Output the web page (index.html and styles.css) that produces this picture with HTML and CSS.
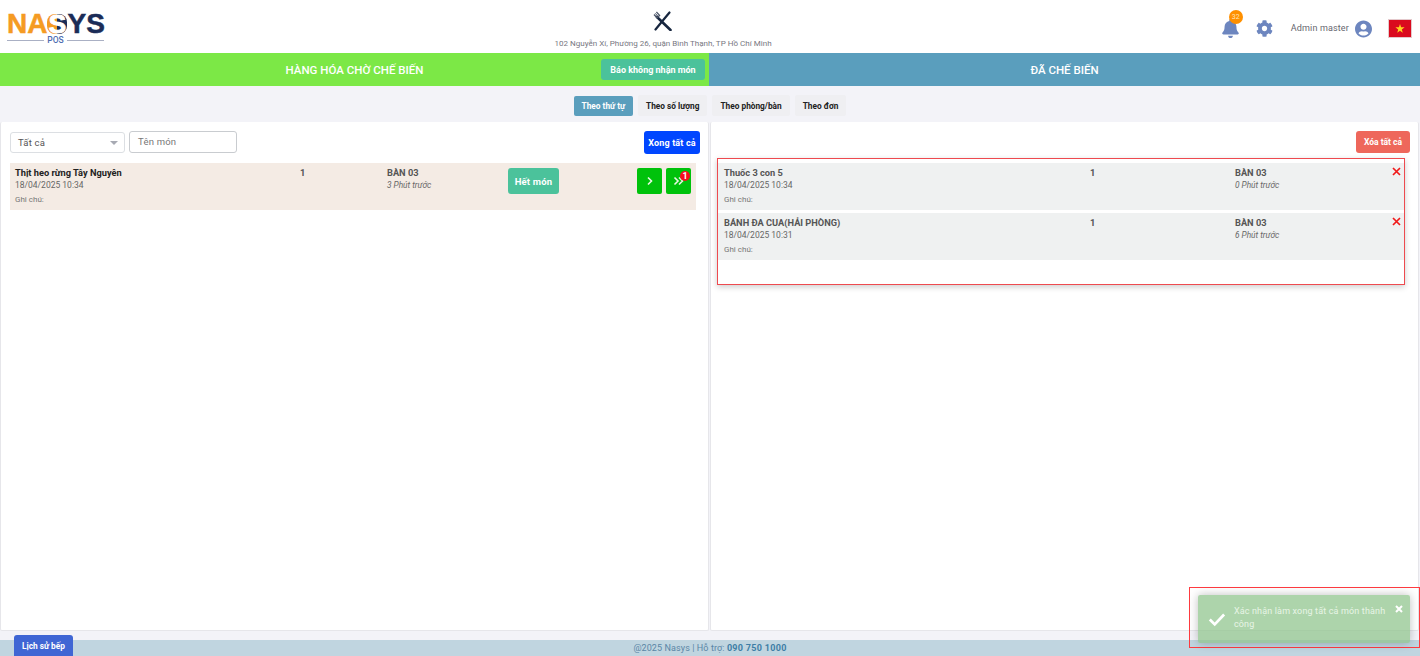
FILE: index.html
```html
<!DOCTYPE html>
<html lang="vi">
<head>
<meta charset="utf-8">
<title>Nasys POS</title>
<link rel="stylesheet" href="styles.css">
</head>
<body>
<div class="page">
  <header class="topbar">
    <div class="logo">
      <div class="logo-word"><span class="l-o">NA</span><span class="l-s">S</span><span class="l-n">YS</span></div>
      <div class="logo-sub"><i></i><span>POS</span><i></i></div>
    </div>
    <div class="brand">
      <svg class="cutlery" viewBox="0 0 20 20" width="20" height="20" aria-hidden="true">
        <path d="M4 6 L17.5 19" stroke="#17263f" stroke-width="2.6" stroke-linecap="round"/>
        <path d="M16.5 1.5 L11.5 7.5 L2.5 18.5" stroke="#17263f" stroke-width="2.2" stroke-linecap="round"/>
        <path d="M1 3.5 L4 6.8 L6.6 4.4 L3.4 1" stroke="#4b5568" stroke-width="1.3" fill="none"/>
        <path d="M2.2 2.3 L5.2 5.6" stroke="#4b5568" stroke-width="1"/>
      </svg>
      <div class="address">102 Nguyễn Xí, Phường 26, quận Bình Thạnh, TP Hồ Chí Minh</div>
    </div>
    <div class="tools">
      <div class="bell">
        <svg viewBox="0 0 448 512" width="17" height="19" aria-hidden="true"><path fill="#6d86bf" d="M224 512c35.32 0 63.97-28.65 63.97-64H160.03c0 35.35 28.65 64 63.97 64zm215.39-149.71c-19.32-20.76-55.47-51.99-55.47-154.29 0-77.7-54.48-139.9-127.94-155.16V32c0-17.67-14.32-32-31.98-32s-31.98 14.33-31.98 32v20.84C118.56 68.1 64.08 130.3 64.08 208c0 102.3-36.15 133.53-55.47 154.29-6 6.45-8.66 14.16-8.61 21.71.11 16.4 12.98 32 32.1 32h383.8c19.12 0 32-15.6 32.1-32 .05-7.55-2.61-15.27-8.61-21.71z"/></svg>
        <span class="bell-badge">32</span>
      </div>
      <svg class="gear" viewBox="0 0 512 512" width="17" height="17" aria-hidden="true"><path fill="#6d86bf" d="M487.4 315.7l-42.6-24.6c4.3-23.2 4.3-47 0-70.2l42.6-24.6c4.9-2.8 7.1-8.6 5.5-14-11.1-35.6-30-67.8-54.7-94.6-3.8-4.1-10-5.1-14.8-2.3L380.8 110c-17.9-15.4-38.5-27.3-60.8-35.1V25.8c0-5.6-3.9-10.5-9.4-11.7-36.7-8.2-74.3-7.8-109.2 0-5.5 1.2-9.4 6.1-9.4 11.7V75c-22.2 7.9-42.8 19.8-60.8 35.1L88.7 85.5c-4.9-2.8-11-1.9-14.8 2.3-24.7 26.7-43.6 58.9-54.7 94.6-1.7 5.4.6 11.2 5.5 14L67.3 221c-4.3 23.2-4.3 47 0 70.2l-42.6 24.6c-4.9 2.8-7.1 8.6-5.5 14 11.1 35.6 30 67.8 54.7 94.6 3.8 4.1 10 5.1 14.8 2.3l42.6-24.6c17.9 15.4 38.5 27.3 60.8 35.1v49.2c0 5.6 3.9 10.5 9.4 11.7 36.7 8.2 74.3 7.8 109.2 0 5.5-1.2 9.4-6.1 9.4-11.7v-49.2c22.2-7.9 42.8-19.8 60.8-35.1l42.6 24.6c4.9 2.8 11 1.9 14.8-2.3 24.7-26.7 43.6-58.9 54.7-94.6 1.5-5.5-.7-11.3-5.6-14.1zM256 336c-44.1 0-80-35.9-80-80s35.9-80 80-80 80 35.9 80 80-35.9 80-80 80z"/></svg>
      <span class="username">Admin master</span>
      <svg class="avatar" viewBox="0 0 496 512" width="17" height="18" aria-hidden="true"><path fill="#6d86bf" d="M248 8C111 8 0 119 0 256s111 248 248 248 248-111 248-248S385 8 248 8zm0 96c48.6 0 88 39.4 88 88s-39.4 88-88 88-88-39.4-88-88 39.4-88 88-88zm0 344c-58.7 0-111.3-26.6-146.5-68.2 18.8-35.4 55.6-59.8 98.5-59.8 2.4 0 4.8.4 7.1 1.1 13 4.2 26.6 6.9 40.9 6.9 14.3 0 28-2.7 40.9-6.9 2.3-.7 4.7-1.1 7.1-1.1 42.9 0 79.7 24.4 98.5 59.8C359.3 421.4 306.7 448 248 448z"/></svg>
      <svg class="flag" viewBox="0 0 22 17" width="22" height="17" aria-hidden="true"><rect width="22" height="17" fill="#da0a1e"/><path fill="#ffd21f" d="M11 4 L12.1 7.3 L15.6 7.3 L12.8 9.4 L13.8 12.7 L11 10.7 L8.2 12.7 L9.2 9.4 L6.4 7.3 L9.9 7.3 Z"/></svg>
    </div>
  </header>

  <div class="heads">
    <div class="head head-wait">
      <span class="head-title">HÀNG HÓA CHỜ CHẾ BIẾN</span>
      <button class="btn btn-teal btn-refuse">Báo không nhận món</button>
    </div>
    <div class="head head-done"><span class="head-title">ĐÃ CHẾ BIẾN</span></div>
  </div>

  <nav class="views">
    <button class="view view-on">Theo thứ tự</button>
    <button class="view">Theo số lượng</button>
    <button class="view">Theo phòng/bàn</button>
    <button class="view">Theo đơn</button>
  </nav>

  <main class="panels">
    <section class="panel panel-left">
      <div class="toolbar">
        <div class="filters">
          <div class="select"><span>Tất cả</span><i class="caret"></i></div>
          <div class="search">Tên món</div>
        </div>
        <button class="btn btn-blue">Xong tất cả</button>
      </div>
      <div class="row row-wait">
        <div class="cell-name">
          <div class="name name-dark">Thịt heo rừng Tây Nguyên</div>
          <div class="date">18/04/2025 10:34</div>
          <div class="note">Ghi chú:</div>
        </div>
        <div class="qty">1</div>
        <div>
          <div class="table">BÀN 03</div>
          <div class="ago">3 Phút trước</div>
        </div>
        <div><button class="btn btn-teal btn-out">Hết món</button></div>
        <div class="actions">
          <button class="btn-go">
            <svg viewBox="0 0 8 10" width="8" height="10" aria-hidden="true"><path d="M2 1.5 L5.5 5 L2 8.5" fill="none" stroke="#e9f7e4" stroke-width="1.6"/></svg>
          </button>
          <button class="btn-go">
            <svg viewBox="0 0 12 10" width="12" height="10" aria-hidden="true"><path d="M1.5 1.5 L5 5 L1.5 8.5 M6 1.5 L9.5 5 L6 8.5" fill="none" stroke="#e9f7e4" stroke-width="1.6"/></svg>
            <span class="go-badge">1</span>
          </button>
        </div>
      </div>
    </section>

    <section class="panel panel-right">
      <div class="toolbar toolbar-right">
        <button class="btn btn-red">Xóa tất cả</button>
      </div>
      <div class="done-box">
        <div class="row row-done">
          <div class="cell-name">
            <div class="name">Thuốc 3 con 5</div>
            <div class="date">18/04/2025 10:34</div>
            <div class="note">Ghi chú:</div>
          </div>
          <div class="qty">1</div>
          <div>
            <div class="table">BÀN 03</div>
            <div class="ago">0 Phút trước</div>
          </div>
          <svg class="remove" viewBox="0 0 9 9" width="9" height="9" aria-hidden="true"><path d="M1 1 L8 8 M8 1 L1 8" stroke="#f01a1a" stroke-width="1.7"/></svg>
        </div>
        <div class="row row-done">
          <div class="cell-name">
            <div class="name">BÁNH ĐA CUA(HẢI PHÒNG)</div>
            <div class="date">18/04/2025 10:31</div>
            <div class="note">Ghi chú:</div>
          </div>
          <div class="qty">1</div>
          <div>
            <div class="table">BÀN 03</div>
            <div class="ago">6 Phút trước</div>
          </div>
          <svg class="remove" viewBox="0 0 9 9" width="9" height="9" aria-hidden="true"><path d="M1 1 L8 8 M8 1 L1 8" stroke="#f01a1a" stroke-width="1.7"/></svg>
        </div>
      </div>
    </section>
  </main>

  <footer class="footer">
    <button class="btn history">Lịch sử bếp</button>
    <span>@2025 Nasys | Hỗ trợ: <b>090 750 1000</b></span>
  </footer>

  <div class="notice-frame">
    <div class="notice">
      <svg viewBox="0 0 20 16" width="20" height="16" aria-hidden="true"><path d="M2 8.5 L7.5 14 L18 3" fill="none" stroke="#fff" stroke-width="3"/></svg>
      <div class="notice-text">Xác nhận làm xong tất cả món thành công</div>
      <svg class="notice-x" viewBox="0 0 8 8" width="8" height="8" aria-hidden="true"><path d="M1 1 L7 7 M7 1 L1 7" stroke="#fff" stroke-width="2"/></svg>
    </div>
  </div>
</div>
</body>
</html>
```

FILE: styles.css
```css
* { box-sizing: border-box; }
html, body { margin: 0; padding: 0; height: 100%; }
body {
  font-family: Roboto, "Liberation Sans", sans-serif;
  font-size: 9px;
  color: #555;
  background: #f3f3f8;
  overflow: hidden;
}
button { font-family: inherit; cursor: pointer; border: 0; }
.page { position: relative; height: 656px; display: flex; flex-direction: column; }

/* top bar */
.topbar {
  height: 53px;
  flex: none;
  background: #fff;
  display: grid;
  grid-template-columns: 513px 300px 1fr;
  align-items: start;
}
.logo { padding: 14px 0 0 7px; width: 110px; }
.logo-word {
  display: flex;
  height: 20px;
  font: 700 28px/20px "Liberation Sans", Arial, sans-serif;
  white-space: nowrap;
}
.l-o { color: #f59b23; -webkit-text-stroke: .5px #f59b23; }
.l-n { color: #1b2c57; -webkit-text-stroke: .5px #1b2c57; }
.l-s {
  width: 20px;
  text-align: center;
  background: linear-gradient(90deg, #f59b23 0 50%, #1b2c57 50% 100%);
  border-radius: 8px;
  color: #fff;
  -webkit-text-stroke: 1px #fff;
  font-size: 26px;
}
.logo-sub {
  width: 97px;
  display: flex;
  align-items: center;
  gap: 3px;
  margin-top: 2px;
  font-size: 8.5px;
  line-height: 8px;
  font-weight: 500;
  color: #4e6cb0;
}
.logo-sub i { flex: 1; height: 1px; background: #aab0c4; }
.brand { display: flex; flex-direction: column; align-items: center; padding-top: 11px; }
.cutlery { display: block; }
.address { margin-top: 8px; font-size: 8.05px; line-height: 10px; color: #77777f; white-space: nowrap; }
.tools {
  display: flex;
  justify-content: flex-end;
  align-items: center;
  padding: 19px 9px 0 0;
}
.bell { position: relative; display: flex; margin-right: 17px; }
.bell-badge {
  position: absolute;
  top: -9px;
  left: 7px;
  width: 14px;
  height: 14px;
  border-radius: 50%;
  background: #ff9000;
  color: #ffe3b8;
  font-size: 7px;
  line-height: 14px;
  text-align: center;
}
.gear { margin-right: 18px; }
.username { font-size: 9px; letter-spacing: .15px; color: #66666e; margin-right: 6px; margin-top: -2px; }
.avatar { margin-right: 17px; }
.flag { outline: 1px solid #e4c9cc; }

/* column heads */
.heads { height: 33px; flex: none; display: grid; grid-template-columns: 709px 1fr; }
.head { display: flex; align-items: center; justify-content: center; position: relative; }
.head-wait { background: #7ce846; }
.head-done { background: #5a9ebd; }
.head-title { color: #fff; font-size: 11.5px; font-weight: 500; }
.btn-refuse { position: absolute; right: 4px; top: 6px; height: 21px; width: 104px; }
.btn {
  border-radius: 3px;
  color: #fff;
  font-size: 9px;
  font-weight: 700;
  white-space: nowrap;
  padding: 0;
}
.btn-teal { background: #4bc29b; }
.btn-blue { background: #0046ff; width: 56px; height: 23px; letter-spacing: .15px; }
.btn-red { background: #ee675b; width: 54px; height: 22px; font-size: 8.5px; }

/* view switch */
.views {
  height: 36px;
  flex: none;
  display: flex;
  justify-content: center;
  align-items: flex-start;
  gap: 5px;
  padding: 9px 0 0 0;
}
.view {
  height: 21px;
  padding: 0 8px;
  border-radius: 2px;
  background: #efeff2;
  color: #222;
  font-size: 8.3px;
  font-weight: 700;
}
.view-on { background: #5a9ebd; color: #fff; height: 20px; margin-top: 1px; }

/* panels */
.panels {
  height: 509px;
  flex: none;
  display: grid;
  grid-template-columns: 709px 709px;
  gap: 1px;
}
.panel { background: #fff; border: 1px solid #e6e6ea; border-top: 0; border-radius: 2px; }
.panel-left { padding: 9px 12px 0 9px; }
.panel-right { padding: 9px 8px 0 6px; }
.toolbar { display: flex; justify-content: space-between; align-items: flex-start; height: 32px; margin-right: -4px; }
.toolbar-right { justify-content: flex-end; height: 27px; margin-right: 0; }
.filters { display: flex; gap: 4px; }
.select, .search {
  background: #fff;
  border: 1px solid #dcdfe3;
  border-radius: 3px;
  display: flex;
  align-items: center;
  font-size: 9.5px;
  letter-spacing: .2px;
}
.select { width: 115px; height: 21px; padding: 0 6px 0 7px; justify-content: space-between; margin-top: 1px; color: #555; }
.search { width: 108px; height: 22px; padding: 0 0 2px 8px; border-color: #c9ccd0; color: #777; }
.caret { border: 4px solid transparent; border-top-color: #a7aab3; border-bottom: 0; }

/* rows */
.row { position: relative; display: grid; height: 47px; }
.row-wait {
  background: #f4ebe4;
  grid-template-columns: 285px 87px 121px 1fr auto;
  padding: 4px 5px 0;
}
.row-done {
  background: #eff1f1;
  grid-template-columns: 366px 145px 1fr;
  padding: 4px 6px 0;
  margin-bottom: 3px;
}
.cell-name { min-width: 0; }
.name { font-size: 9.25px; font-weight: 700; line-height: 11px; color: #555; }
.name-dark { color: #222; }
.date { font-size: 8.5px; line-height: 11px; margin-top: 2px; color: #666; }
.note { font-size: 8px; line-height: 11px; margin-top: 3px; color: #777; }
.qty { font-size: 9.25px; line-height: 11px; font-weight: 700; color: #555; }
.table { font-size: 9.25px; line-height: 11px; font-weight: 700; color: #555; }
.ago { font-size: 8.3px; line-height: 11px; margin-top: 2px; font-style: italic; color: #666; }
.btn-out { width: 51px; height: 26px; margin-top: 1px; font-size: 9.5px; letter-spacing: .2px; }
.actions { display: flex; gap: 4px; padding-top: 1px; }
.btn-go {
  position: relative;
  width: 25px;
  height: 26px;
  border-radius: 2px;
  background: #00c20b;
  padding: 0;
  display: flex;
  align-items: center;
  justify-content: center;
}
.go-badge {
  position: absolute;
  top: 3px;
  right: 1px;
  width: 10px;
  height: 10px;
  border-radius: 50%;
  background: #fa0d1d;
  color: #fff;
  font-size: 9px;
  line-height: 10px;
  font-weight: 700;
  text-align: center;
}
.done-box {
  width: 688px;
  height: 127px;
  border: 1px solid #ee4a4f;
  box-shadow: 0 2px 6px rgba(0,0,0,.2);
  padding-top: 4px;
}
.remove { position: absolute; right: 3px; top: 4px; }

/* footer */
.footer {
  position: relative;
  margin-top: 9px;
  height: 16px;
  flex: none;
  background: #c0d5e0;
  display: flex;
  align-items: center;
  justify-content: center;
  font-size: 9px;
  color: #5a86a6;
  letter-spacing: .1px;
}
.footer b { color: #3e7ea6; font-weight: 700; letter-spacing: .3px; }
.history {
  position: absolute;
  left: 14px;
  bottom: 0;
  width: 59px;
  height: 21px;
  font-size: 8.3px;
  background: #3f66d4;
  border-radius: 3px 3px 0 0;
}

/* toast */
.notice-frame {
  position: absolute;
  left: 1189px;
  top: 587px;
  width: 231px;
  height: 61px;
  box-shadow: inset 0 0 0 1px #ff3b40;
  padding: 8px 10px 0 9px;
}
.notice {
  position: relative;
  height: 48px;
  background: rgba(141, 196, 138, .72);
  border-radius: 2px;
  box-shadow: 0 0 10px rgba(0,0,0,.25);
  display: flex;
  align-items: center;
  padding: 0 20px 0 10px;
  gap: 8px;
  color: #e8f5e6;
  font-size: 9px;
  line-height: 13px;
  letter-spacing: .15px;
}
.notice-text { margin-top: -2px; }
.notice-x { position: absolute; right: 7px; top: 10px; }
```
